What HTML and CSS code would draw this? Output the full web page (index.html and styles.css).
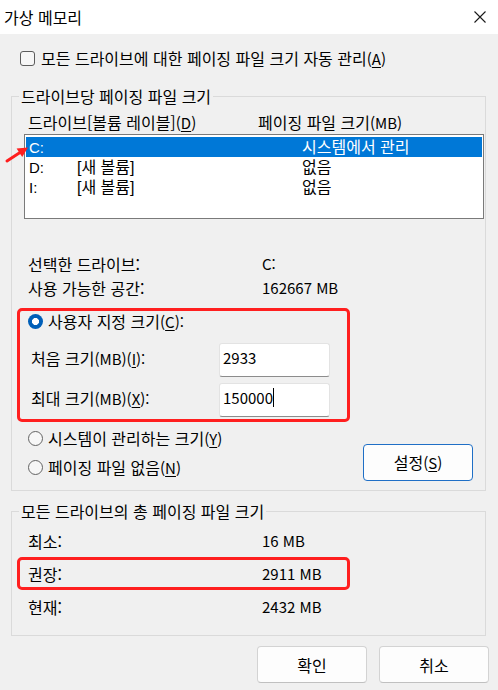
FILE: index.html
```html
<!DOCTYPE html>
<html lang="ko">
<head>
<meta charset="utf-8">
<title>가상 메모리</title>
<link rel="stylesheet" href="styles.css">
</head>
<body>
<div class="window">
  <div class="titlebar">
    <span class="title">가상 메모리</span>
    <svg class="close" width="12" height="12" viewBox="0 0 12 12"><path d="M0.5 0.5L11.5 11.5M11.5 0.5L0.5 11.5" stroke="#1a1a1a" stroke-width="1.1" fill="none"/></svg>
  </div>
  <div class="content">
    <div class="check-row"><span class="checkbox"></span><span>모든 드라이브에 대한 페이징 파일 크기 자동 관리<span class="lat">(<u>A</u>)</span></span></div>

    <fieldset class="group">
      <legend>드라이브당 페이징 파일 크기</legend>
      <div class="list-head"><span class="col-drive">드라이브[볼륨 레이블]<span class="lat">(<u>D</u>)</span></span><span>페이징 파일 크기<span class="lat">(MB)</span></span></div>
      <div class="listbox">
        <div class="list-row selected"><span class="c1 num">C:</span><span class="c2"></span><span>시스템에서 관리</span></div>
        <div class="list-row"><span class="c1 num">D:</span><span class="c2">[새 볼륨]</span><span>없음</span></div>
        <div class="list-row"><span class="c1 num">I:</span><span class="c2">[새 볼륨]</span><span>없음</span></div>
      </div>
      <div class="info">
        <div class="kv"><span>선택한 드라이브:</span><span class="num">C:</span></div>
        <div class="kv"><span>사용 가능한 공간:</span><span class="num">162667 MB</span></div>
      </div>
      <div class="custom-box">
        <div class="radio-row"><span class="radio checked"></span><span>사용자 지정 크기<span class="lat">(<u>C</u>):</span></span></div>
        <div class="field-row first"><span class="field-label">처음 크기<span class="lat">(MB)(<u>I</u>):</span></span><div class="input num">2933</div></div>
        <div class="field-row"><span class="field-label">최대 크기<span class="lat">(MB)(<u>X</u>):</span></span><div class="input num">150000<span class="caret"></span></div></div>
      </div>
      <div class="options">
        <div class="radios">
          <div class="radio-row"><span class="radio"></span><span>시스템이 관리하는 크기<span class="lat">(<u>Y</u>)</span></span></div>
          <div class="radio-row"><span class="radio"></span><span>페이징 파일 없음<span class="lat">(<u>N</u>)</span></span></div>
        </div>
        <button class="btn btn-set">설정<span class="lat">(<u>S</u>)</span></button>
      </div>
    </fieldset>

    <fieldset class="group group-total">
      <legend>모든 드라이브의 총 페이징 파일 크기</legend>
      <div class="totals">
        <div class="total-row"><span>최소:</span><span class="num">16 MB</span></div>
        <div class="total-row marked"><span>권장:</span><span class="num">2911 MB</span></div>
        <div class="total-row"><span>현재:</span><span class="num">2432 MB</span></div>
      </div>
    </fieldset>

    <div class="buttons">
      <button class="btn">확인</button>
      <button class="btn">취소</button>
    </div>
  </div>

  <svg class="arrow" width="26" height="22" viewBox="0 0 26 22">
    <path d="M3 18L16 9.6" stroke="#ff1f1f" stroke-width="3" stroke-linecap="round" fill="none"/>
    <polygon points="24,4.5 18.2,14 12.6,5.6" fill="#ff1f1f"/>
  </svg>
</div>
</body>
</html>
```

FILE: styles.css
```css
* { box-sizing: border-box; }
html, body { margin: 0; padding: 0; }
body {
  width: 498px;
  height: 690px;
  background: #f0f0f0;
  font-family: "Noto Sans CJK KR", "Noto Sans", sans-serif;
  font-size: 16px;
  line-height: 20px;
  color: #000;
  overflow: hidden;
}
u { text-underline-offset: 2px; text-decoration-thickness: 1px; }
.num { font-size: 15px; }
.lat { font-size: 15px; }

.window { position: relative; width: 498px; height: 690px; }

.titlebar {
  height: 34px;
  background: #fff;
  display: flex;
  align-items: center;
  justify-content: space-between;
  padding: 0 12px 0 4px;
}
.title { font-size: 16px; color: #000; }
.close { display: block; }

.content { padding: 0 12px 0 11px; }

.check-row {
  display: flex;
  align-items: center;
  gap: 6px;
  height: 20px;
  margin-top: 14px;
  padding-left: 9px;
}
.checkbox {
  width: 15px;
  height: 15px;
  border: 1px solid #5c5c5c;
  border-radius: 3px;
  background: #f6f6f6;
}

.group {
  margin: 18px 0 0;
  padding: 0;
  border: 1px solid #dadada;
  min-width: 0;
}
.group legend {
  margin-left: 7px;
  padding: 0 2px;
  line-height: 20px;
}
.group-total { margin-top: 10px; }

.list-head {
  display: flex;
  height: 20px;
  margin-top: 6px;
  padding-left: 16px;
}
.col-drive { width: 230px; }

.listbox {
  margin: 2px 1px 0 12px;
  height: 85px;
  border: 1px solid #7a7a7a;
  background: #fff;
  padding: 2px 1px 0 1px;
  font-family: "Liberation Sans", "Noto Sans CJK KR", sans-serif;
}
.list-row {
  display: flex;
  height: 20px;
  line-height: 22px;
  padding-left: 3px;
}
.list-row .c1 { width: 48px; }
.list-row .c2 { width: 225px; }
.list-row.selected { background: #0078d7; color: #fff; }

.info {
  margin-top: 35px;
  padding-left: 16px;
  display: flex;
  flex-direction: column;
  gap: 4px;
}
.kv {
  display: grid;
  grid-template-columns: 234px auto;
  height: 20px;
}

.custom-box {
  margin: 10px 0 0 5px;
  width: 333px;
  height: 114px;
  border: 3px solid #ff1f1f;
  border-radius: 5px;
}
.radio-row {
  display: flex;
  align-items: center;
  gap: 5px;
  height: 20px;
}
.custom-box .radio-row { padding-left: 8px; }
.radio {
  width: 15px;
  height: 15px;
  flex: none;
  border: 1px solid #636363;
  border-radius: 50%;
  background: #f7f7f7;
}
.radio.checked {
  border: none;
  background: radial-gradient(circle, #fff 0 3.2px, #005fb8 3.8px);
}

.field-row {
  display: flex;
  align-items: center;
  margin-top: 6px;
  padding-left: 11px;
}
.field-row.first { margin-top: 12px; }
.field-label { width: 188px; margin-top: -3px; }
.input {
  width: 111px;
  height: 34px;
  background: #fff;
  border: 1px solid #e3e3e3;
  border-bottom-color: #8c8c8c;
  border-radius: 3px;
  padding: 4px 3px;
  line-height: 20px;
  display: flex;
  align-items: flex-start;
}
.caret {
  display: inline-block;
  width: 1px;
  height: 19px;
  background: #000;
}

.options {
  display: flex;
  justify-content: space-between;
  align-items: flex-start;
  padding: 0 12px 9px 16px;
}
.radios {
  display: flex;
  flex-direction: column;
  gap: 9px;
  padding-top: 6px;
}

.btn {
  width: 110px;
  height: 37px;
  background: #fdfdfd;
  border: 1px solid #d3d3d3;
  border-bottom-color: #c0c0c0;
  border-radius: 4px;
  font-family: inherit;
  font-size: 16px;
  line-height: 20px;
  color: #000;
  padding: 0;
}
.btn-set {
  margin-top: 22px;
  border: 1px solid #1f6fc6;
}

.totals { padding: 3px 0 12px 5px; }
.total-row {
  display: grid;
  grid-template-columns: 234px auto;
  align-items: center;
  width: 333px;
  height: 33px;
  padding-left: 8px;
  border: 3px solid transparent;
  border-radius: 5px;
}
.total-row.marked { border-color: #ff1f1f; }

.buttons {
  display: flex;
  justify-content: flex-end;
  gap: 12px;
  margin: 10px -3px 0 0;
}

.arrow {
  position: absolute;
  left: 4px;
  top: 143px;
}
```
